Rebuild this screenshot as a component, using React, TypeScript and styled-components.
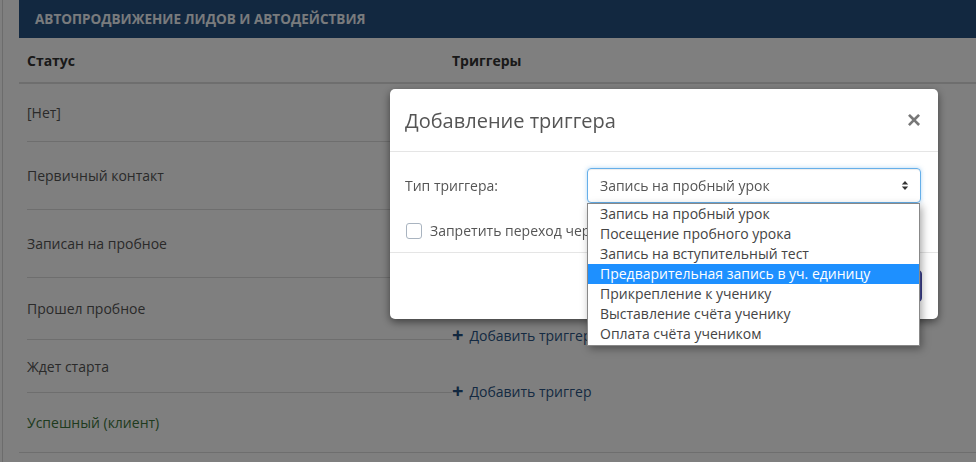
import React, { useState } from 'react';
import styled, { createGlobalStyle } from 'styled-components';

const GlobalStyle = createGlobalStyle`
  html, body {
    margin: 0;
    padding: 0;
    background: #fff;
    font-family: "Open Sans", "Liberation Sans", sans-serif;
    color: #333;
  }
`;

const statuses = [
  { name: '[Нет]', h: 58 },
  { name: 'Первичный контакт', h: 68 },
  { name: 'Записан на пробное', h: 68 },
  { name: 'Прошел пробное', h: 62 },
  { name: 'Ждет старта', h: 53 },
  { name: 'Успешный (клиент)', h: 59, success: true },
];

const options = [
  'Запись на пробный урок',
  'Посещение пробного урока',
  'Запись на вступительный тест',
  'Предварительная запись в уч. единицу',
  'Прикрепление к ученику',
  'Выставление счёта ученику',
  'Оплата счёта учеником',
];

export default function App() {
  const [selected] = useState(0);
  const [hovered, setHovered] = useState(3);

  return (
    <>
      <GlobalStyle />
      <Page>
        <Content>
          <PanelHeader>Автопродвижение лидов и автодействия</PanelHeader>
          <Table>
            <HeadRow>
              <HeadCell>Статус</HeadCell>
              <HeadCell>Триггеры</HeadCell>
            </HeadRow>
            <Body>
              <StatusColumn>
                {statuses.map((s) => (
                  <StatusCell key={s.name} $success={s.success} style={{ height: s.h }}>
                    {s.name}
                  </StatusCell>
                ))}
              </StatusColumn>
              <TriggerColumn>
                <TriggerSpacer />
                <AddLink>
                  <Plus>+</Plus> Добавить триггер
                </AddLink>
                <AddLink>
                  <Plus>+</Plus> Добавить триггер
                </AddLink>
              </TriggerColumn>
            </Body>
          </Table>
        </Content>
      </Page>

      <Backdrop />

      <Modal>
        <ModalHeader>
          <ModalTitle>Добавление триггера</ModalTitle>
          <Close>×</Close>
        </ModalHeader>
        <ModalBody>
          <FormRow>
            <Label>Тип триггера:</Label>
            <SelectWrap>
              <SelectBox>
                <span>{options[selected]}</span>
                <Caret viewBox="0 0 8 12">
                  <path d="M4 1 L7.5 5 H0.5 Z M4 11 L7.5 7 H0.5 Z" fill="#333" />
                </Caret>
              </SelectBox>
              <Listbox>
                {options.map((o, i) => (
                  <Option key={o} $active={i === hovered} onMouseEnter={() => setHovered(i)}>
                    {o}
                  </Option>
                ))}
              </Listbox>
            </SelectWrap>
          </FormRow>
          <CheckRow>
            <CheckBox />
            <CheckLabel>Запретить переход через статусы</CheckLabel>
          </CheckRow>
        </ModalBody>
        <ModalFooter>
          <SaveButton>OK</SaveButton>
        </ModalFooter>
      </Modal>
    </>
  );
}

const Page = styled.div`
  height: 462px;
  overflow: hidden;
  margin-left: 2px;
  box-shadow: inset 1px 0 0 #d8d8d8;
  padding-left: 17px;
`;

const Content = styled.div`
  display: flex;
  flex-direction: column;
`;

const PanelHeader = styled.div`
  height: 38px;
  background: #245080;
  color: #f2f6fa;
  font-size: 13.5px;
  font-weight: 700;
  text-transform: uppercase;
  display: flex;
  align-items: center;
  padding-left: 16px;
`;

const Table = styled.div`
  display: flex;
  flex-direction: column;
  border-bottom: 1px solid #ddd;
`;

const HeadRow = styled.div`
  display: grid;
  grid-template-columns: 433px 1fr;
  height: 44px;
  align-items: center;
  border-bottom: 2px solid #ddd;
`;

const HeadCell = styled.div`
  font-size: 14px;
  font-weight: 700;
  color: #333;
  padding-left: 8px;
  &:last-child {
    padding-left: 0;
  }
`;

const Body = styled.div`
  display: grid;
  grid-template-columns: 433px 1fr;
`;

const StatusColumn = styled.div`
  display: flex;
  flex-direction: column;
  padding-left: 8px;
`;

const StatusCell = styled.div<{ $success?: boolean }>`
  display: flex;
  align-items: center;
  font-size: 14px;
  color: ${(p) => (p.$success ? '#3c763d' : '#555')};
  border-bottom: 1px solid #ddd;
  box-sizing: border-box;
  &:last-child {
    border-bottom: none;
  }
`;

const TriggerColumn = styled.div`
  display: flex;
  flex-direction: column;
  gap: 36px;
`;

const TriggerSpacer = styled.div`
  height: 205px;
`;

const AddLink = styled.a`
  display: flex;
  align-items: center;
  gap: 6px;
  height: 20px;
  font-size: 14px;
  color: #2a5484;
  cursor: pointer;
`;

const Plus = styled.span`
  font-size: 20px;
  font-weight: 700;
  line-height: 1;
  color: #245080;
`;

const Backdrop = styled.div`
  position: fixed;
  inset: 0;
  background: rgba(0, 0, 0, 0.5);
`;

const Modal = styled.div`
  position: fixed;
  left: 390px;
  top: 89px;
  width: 548px;
  height: 230px;
  background: #fff;
  border-radius: 5px;
  box-shadow: 0 3px 9px rgba(0, 0, 0, 0.5);
  display: flex;
  flex-direction: column;
`;

const ModalHeader = styled.div`
  height: 62px;
  display: flex;
  align-items: center;
  justify-content: space-between;
  padding: 0 17px 0 15px;
  border-bottom: 1px solid #e5e5e5;
`;

const ModalTitle = styled.h4`
  margin: 0;
  font-size: 20px;
  font-weight: 400;
  color: #555;
`;

const Close = styled.button`
  border: none;
  background: none;
  padding: 0;
  font-size: 24px;
  font-weight: 700;
  color: #777;
  line-height: 1;
  cursor: pointer;
  font-family: "Liberation Sans", sans-serif;
`;

const ModalBody = styled.div`
  display: flex;
  flex-direction: column;
  padding: 16px 17px 12px 15px;
  gap: 18px;
  border-bottom: 1px solid #e5e5e5;
`;

const FormRow = styled.div`
  display: grid;
  grid-template-columns: 182px 1fr;
  align-items: center;
`;

const Label = styled.label`
  font-size: 14px;
  color: #555;
`;

const SelectWrap = styled.div`
  position: relative;
`;

const SelectBox = styled.div`
  height: 35px;
  box-sizing: border-box;
  border: 1px solid #66afe9;
  border-radius: 4px;
  box-shadow: inset 0 1px 1px rgba(0, 0, 0, 0.075), 0 0 4px rgba(102, 175, 233, 0.5);
  display: flex;
  align-items: center;
  justify-content: space-between;
  padding: 0 11px 0 12px;
  font-size: 14px;
  color: #555;
`;

const Caret = styled.svg`
  width: 8px;
  height: 11px;
`;

const Listbox = styled.div`
  position: absolute;
  top: 35px;
  left: 0;
  width: 333px;
  box-sizing: border-box;
  background: #fff;
  border: 1px solid #888;
  box-shadow: 2px 3px 8px rgba(0, 0, 0, 0.35);
  padding: 0 0 1px;
  z-index: 2;
`;

const Option = styled.div<{ $active?: boolean }>`
  height: 20px;
  line-height: 20px;
  padding-left: 12px;
  font-size: 14px;
  color: ${(p) => (p.$active ? '#fff' : '#444')};
  background: ${(p) => (p.$active ? '#1e90ff' : '#fff')};
  white-space: nowrap;
`;

const CheckRow = styled.div`
  display: flex;
  align-items: center;
  gap: 8px;
  padding-left: 1px;
`;

const CheckBox = styled.span`
  width: 14px;
  height: 14px;
  border: 1px solid #a9b4c0;
  border-radius: 3px;
  background: #fff;
`;

const CheckLabel = styled.span`
  font-size: 14px;
  color: #555;
`;

const ModalFooter = styled.div`
  flex: 1;
  display: flex;
  align-items: center;
  justify-content: flex-end;
  padding: 0 16px;
`;

const SaveButton = styled.button`
  height: 32px;
  padding: 0 14px;
  border: 1px solid #3b3f8a;
  border-radius: 4px;
  background: #4a4f9e;
  color: #fff;
  font-size: 14px;
  font-family: inherit;
`;
